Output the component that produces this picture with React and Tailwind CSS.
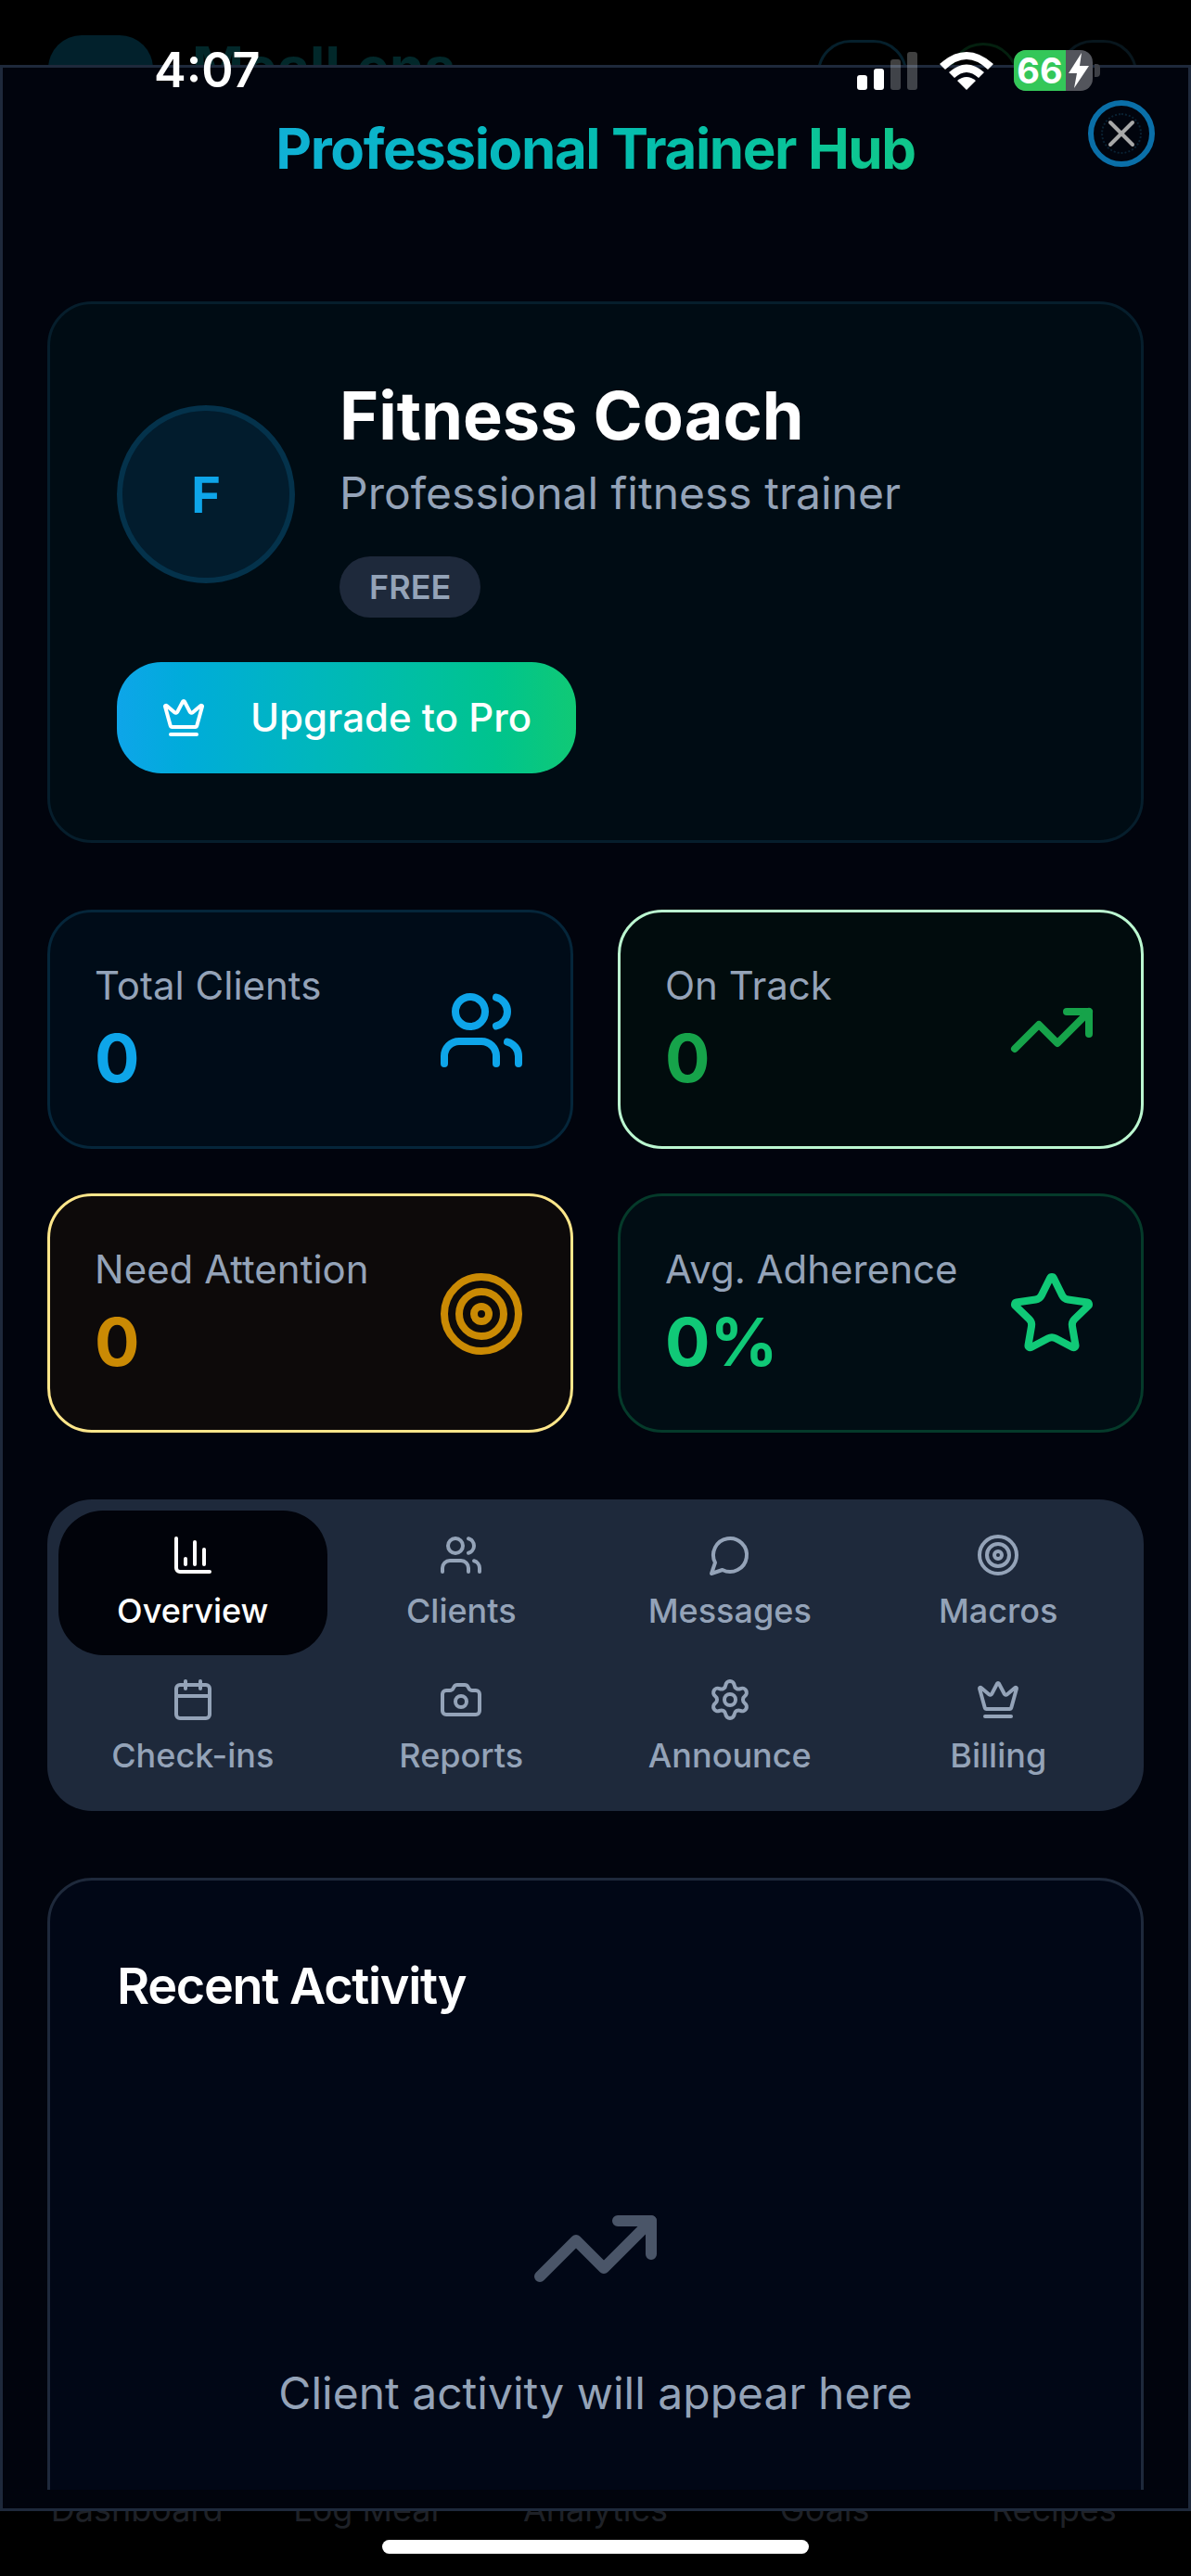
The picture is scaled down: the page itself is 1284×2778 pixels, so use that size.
import React from 'react';
import { X, Crown, Users, TrendingUp, Target, Star, ChartColumn, Calendar, Camera, Settings } from 'lucide-react';

// lucide's older chat bubble, sharp tail like the reference
const Bubble = ({ size }) => (
    <svg width={size} height={size} viewBox="0 0 24 24" fill="none" stroke="currentColor" strokeWidth="2" strokeLinecap="round" strokeLinejoin="round">
        <path d="M7.9 20A9 9 0 1 0 4 16.1L2 22Z" />
    </svg>
);

const tabs = [
    { label: 'Overview', icon: ChartColumn, active: true },
    { label: 'Clients', icon: Users },
    { label: 'Messages', icon: Bubble },
    { label: 'Macros', icon: Target },
    { label: 'Check-ins', icon: Calendar },
    { label: 'Reports', icon: Camera },
    { label: 'Announce', icon: Settings },
    { label: 'Billing', icon: Crown },
];

const StatCard = ({ label, value, icon: Icon, box, tone }) => (
    <div className={`h-[258px] rounded-[48px] border-[3px] px-[48px] pt-[49px] pb-[48px] flex items-center justify-between ${box}`}>
        <div className="self-start">
            <p className="text-[42px] leading-[60px] text-[#94a3b8]">{label}</p>
            <p className={`text-[72px] leading-[96px] font-bold ${tone}`}>{value}</p>
        </div>
        <Icon size={96} className={tone} />
    </div>
);

const StatusBar = () => (
    <div className="absolute top-[46px] left-0 w-full h-[60px] flex items-center pl-[166px] pr-[98px] justify-between">
        <span className="text-[52px] leading-[60px] font-semibold text-white">4:07</span>
        <div className="flex items-center">
            <div className="flex items-end gap-[7px] h-[42px] mr-[24px]">
                <div className="w-[11px] h-[16px] rounded-[3px] bg-white" />
                <div className="w-[11px] h-[23px] rounded-[3px] bg-white" />
                <div className="w-[11px] h-[33px] rounded-[3px] bg-white/25" />
                <div className="w-[11px] h-[41px] rounded-[3px] bg-white/25" />
            </div>
            <svg width="58" height="42" viewBox="0 0 58 42" className="mr-[22px]">
                <path d="M29 42 L19 32 Q29 24 39 32 Z" fill="#fff" />
                <path d="M10 23 Q29 6 48 23 L42 29 Q29 17 16 29 Z" fill="#fff" />
                <path d="M0 14 Q29 -12 58 14 L52 20 Q29 -2 6 20 Z" fill="#fff" />
            </svg>
            <div className="relative w-[85px] h-[44px] rounded-[13px] bg-[#53555c] overflow-hidden flex items-center">
                <div className="w-[56px] h-full bg-[#34c759] flex items-center justify-center">
                    <span className="text-[38px] leading-[44px] font-bold text-white">66</span>
                </div>
                <svg width="22" height="38" viewBox="0 0 22 38" className="ml-[3px]">
                    <path d="M14 0 L0 22 H9 L6 38 L22 14 H12 Z" fill="#fff" />
                </svg>
            </div>
            <div className="w-[6px] h-[14px] rounded-r-[4px] bg-[#3d3f45] ml-[2px]" />
        </div>
    </div>
);

export default function App() {
    return (
        <div className="relative w-[1284px] h-[2778px] bg-black overflow-hidden flex flex-col justify-between font-[Inter,sans-serif]">

            {/* app behind the sheet */}
            <header className="h-[70px] px-[52px] pt-[38px] flex items-start justify-between overflow-hidden">
                <div className="flex items-start gap-[42px]">
                    <div className="w-[113px] h-[113px] rounded-[36px] bg-[#02212c] flex items-center justify-center">
                        <Camera size={60} className="text-[#2a343a]" />
                    </div>
                    <span className="-mt-[8px] text-[60px] leading-[84px] font-bold text-[#02282a]">MealLens</span>
                </div>
                <div className="flex items-start gap-[44px] pt-[5px] pr-[6px]">
                    <div className="w-[97px] h-[97px] rounded-[36px] border-[3px] border-[#06202c]" />
                    <div className="w-[76px] h-[76px] mt-[3px] rounded-full border-[3px] border-[#04200f]" />
                    <div className="w-[84px] h-[84px] rounded-[36px] border-[3px] border-[#08161d]" />
                </div>
            </header>
            <nav className="grid grid-cols-5 px-[24px] pb-[48px]">
                {['Dashboard', 'Log Meal', 'Analytics', 'Goals', 'Recipes'].map((n) => (
                    <span key={n} className="text-center text-[36px] leading-[48px] text-[#1e2127]">{n}</span>
                ))}
            </nav>

            {/* trainer hub sheet */}
            <div className="absolute top-[70px] left-0 w-full h-[2638px] bg-[#01040d] border-[3px] border-[#1e293b] flex flex-col">
                <div className="relative h-[252px] shrink-0">
                    <h1 className="pt-[45px] text-center text-[60px] leading-[84px] font-bold tracking-[-1.4px] text-transparent bg-clip-text bg-gradient-to-r from-[#10b0d5] to-[#10c78a] w-fit mx-auto">
                        Professional Trainer Hub
                    </h1>
                    <button className="absolute top-[35px] right-[36px] w-[72px] h-[72px] rounded-full border-[6px] border-[#0a6fa8] outline-[2px] outline-dotted outline-[#0a2233] -outline-offset-[16px] flex items-center justify-center">
                        <X size={48} className="text-[#a8a8a8]" />
                    </button>
                </div>

                <main className="flex-1 min-h-0 overflow-hidden px-[48px] mb-[20px] flex flex-col gap-[72px]">
                    <section className="shrink-0 rounded-[48px] border-[3px] border-[#061e2c] bg-[#000c14] p-[72px]">
                        <div className="flex items-center gap-[48px]">
                            <div className="w-[192px] h-[192px] rounded-full border-[6px] border-[#04324b] bg-[#021c2d] flex items-center justify-center text-[54px] font-bold text-[#0ea5e9]">
                                F
                            </div>
                            <div>
                                <h2 className="text-[72px] leading-[96px] font-bold text-white">Fitness Coach</h2>
                                <p className="text-[48px] leading-[72px] text-[#94a3b8]">Professional fitness trainer</p>
                                <span className="mt-[32px] inline-block h-[66px] px-[32px] rounded-full bg-[#1e293b] text-[36px] leading-[66px] font-semibold text-[#94a3b8]">
                                    FREE
                                </span>
                            </div>
                        </div>
                        <button className="mt-[48px] h-[120px] px-[48px] rounded-[48px] flex items-center gap-[48px] bg-gradient-to-r from-[#0ea5e9] to-[#10c975] text-white">
                            <Crown size={48} />
                            <span className="text-[42px] leading-[60px] font-medium">Upgrade to Pro</span>
                        </button>
                    </section>

                    <section className="shrink-0 grid grid-cols-2 gap-[48px]">
                        <StatCard label="Total Clients" value="0" icon={Users} box="bg-[#000c18] border-[#05263a]" tone="text-[#0ea5e9]" />
                        <StatCard label="On Track" value="0" icon={TrendingUp} box="bg-[#010c0d] border-[#bbf7d0]" tone="text-[#16a34a]" />
                        <StatCard label="Need Attention" value="0" icon={Target} box="bg-[#0d0a0a] border-[#fde68a]" tone="text-[#ca8a04]" />
                        <StatCard label="Avg. Adherence" value="0%" icon={Star} box="bg-[#010d14] border-[#053a2a]" tone="text-[#10c977]" />
                    </section>

                    <section className="shrink-0 rounded-[48px] bg-[#1e293b] p-[12px] grid grid-cols-4">
                        {tabs.map(({ label, icon: Icon, active }) => (
                            <button key={label} className={`h-[156px] rounded-[48px] flex flex-col items-center justify-center gap-[12px] ${active ? 'bg-[#01030a] text-white' : 'text-[#94a3b8]'}`}>
                                <Icon size={48} />
                                <span className="text-[36px] leading-[48px] font-medium">{label}</span>
                            </button>
                        ))}
                    </section>

                    <section className="shrink-0 rounded-[48px] border-[3px] border-[#1e293b] bg-[#010716] px-[72px] pt-[72px] pb-[72px] h-[760px]">
                        <h3 className="text-[54px] leading-[84px] font-semibold tracking-[-1.35px] text-white">Recent Activity</h3>
                        <div className="mt-[169px] flex flex-col items-center gap-[48px]">
                            <TrendingUp size={144} className="text-[#4a5568]" />
                            <p className="text-[48px] leading-[72px] text-[#94a3b8]">Client activity will appear here</p>
                        </div>
                    </section>
                </main>
            </div>

            <StatusBar />

            {/* home indicator */}
            <div className="absolute top-[2739px] left-[412px] w-[460px] h-[15px] rounded-full bg-white" />
        </div>
    );
}
